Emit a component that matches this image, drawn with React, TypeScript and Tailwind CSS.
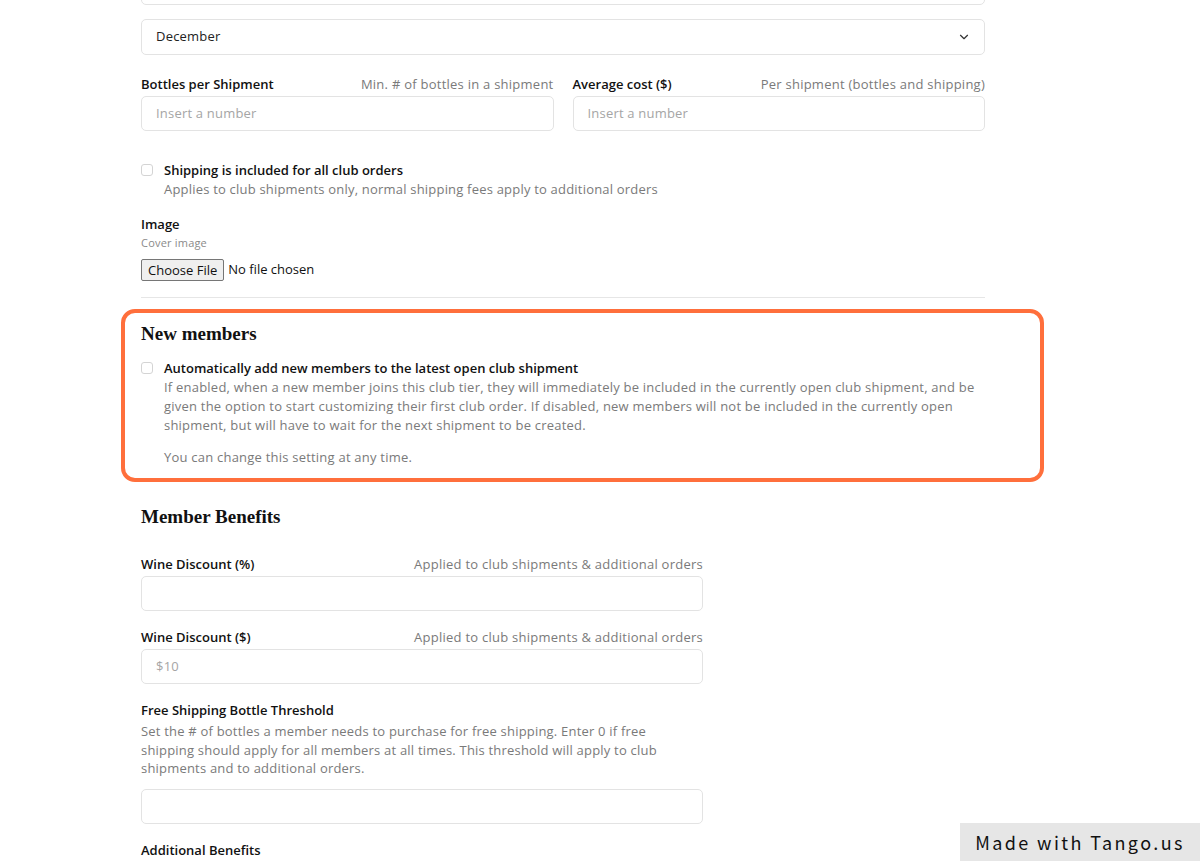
import React from 'react';
import { ChevronDown } from 'lucide-react';

const sans = { fontFamily: '"Open Sans", "Liberation Sans", sans-serif' };
const serif = { fontFamily: '"Liberation Serif", "Times New Roman", serif' };

function Field({ label, hint, placeholder, value }: { label: string; hint?: string; placeholder?: string; value?: string }) {
  return (
    <div>
      <div className="flex justify-between h-[18px] leading-[18px] text-[13px]">
        <span className="font-semibold text-[#111]">{label}</span>
        {hint && <span className="text-[#7a7a7a] tracking-[0.25px]">{hint}</span>}
      </div>
      <div className="mt-[3px] h-[35px] rounded-[5px] border border-[#e3e3e3] bg-white px-[14px] flex items-center text-[13px] tracking-[0.2px] text-[#a5a5a5]">
        {placeholder || value || ''}
      </div>
    </div>
  );
}

function Check() {
  return <span className="mt-[4px] h-3 w-3 shrink-0 rounded-[3px] border border-[#d4d4d4] bg-white" />;
}

export default function App() {
  return (
    <div className="relative min-h-screen overflow-hidden bg-white" style={sans}>
      <div className="ml-[141px] w-[844px]">
        {/* field cut off at the top */}
        <div className="-mt-[31px] h-9 rounded-[5px] border border-[#e3e3e3]" />

        <div className="mt-[14px] h-9 rounded-[5px] border border-[#e3e3e3] px-[14px] flex items-center justify-between text-[13px] tracking-[0.2px] text-[#222]">
          <span>December</span>
          <ChevronDown size={14} strokeWidth={2} className="text-[#333] -mr-[1px]" />
        </div>

        <div className="mt-5 grid grid-cols-2 gap-x-[19px]">
          <Field label="Bottles per Shipment" hint="Min. # of bottles in a shipment" placeholder="Insert a number" />
          <Field label="Average cost ($)" hint="Per shipment (bottles and shipping)" placeholder="Insert a number" />
        </div>

        <div className="mt-[29px] flex gap-[11px]">
          <Check />
          <div className="text-[13px]">
            <div className="h-5 leading-5 font-semibold text-[#111]">Shipping is included for all club orders</div>
            <div className="leading-[19px] text-[#7a7a7a] tracking-[0.2px]">Applies to club shipments only, normal shipping fees apply to additional orders</div>
          </div>
        </div>

        <div className="mt-4">
          <div className="leading-[18px] text-[13px] font-semibold text-[#111]">Image</div>
          <div className="mt-[2px] leading-4 text-[11px] tracking-[0.2px] text-[#8a8a8a]">Cover image</div>
          <div className="mt-2 flex items-center h-[22px] text-[13px] text-[#111]">
            <button className="h-[22px] px-[6px] border border-[#767676] bg-[#efefef] rounded-[2px] text-[13px] leading-none text-[#111]">
              Choose File
            </button>
            <span className="ml-[4px]">No file chosen</span>
          </div>
        </div>

        <div className="mt-4 border-t border-[#e6e6e6]" />

        {/* New members */}
        <section className="relative mt-6">
          <div className="pointer-events-none absolute -top-[13px] -bottom-[15px] -left-5 -right-[59px] rounded-[14px] border-4 border-[#ff6f3c]" />
          <h2 className="h-6 leading-6 text-[19px] font-bold text-[#111]" style={serif}>New members</h2>
          <div className="mt-3 flex gap-[11px]">
            <Check />
            <div className="text-[13px]">
              <div className="h-5 leading-5 font-semibold text-[#111]">Automatically add new members to the latest open club shipment</div>
              <div className="leading-[19px] text-[#7a7a7a] tracking-[0.22px]">
                If enabled, when a new member joins this club tier, they will immediately be included in the currently open club shipment, and be<br />
                given the option to start customizing their first club order. If disabled, new members will not be included in the currently open<br />
                shipment, but will have to wait for the next shipment to be created.
              </div>
              <div className="mt-[13px] leading-[19px] text-[#7a7a7a] tracking-[0.22px]">You can change this setting at any time.</div>
            </div>
          </div>
        </section>

        {/* Member benefits */}
        <h2 className="mt-[38px] h-6 leading-6 text-[19px] font-bold text-[#111]" style={serif}>Member Benefits</h2>

        <div className="w-[562px]">
          <div className="mt-[26px]">
            <Field label="Wine Discount (%)" hint="Applied to club shipments & additional orders" />
          </div>
          <div className="mt-[17px]">
            <Field label="Wine Discount ($)" hint="Applied to club shipments & additional orders" placeholder="$10" />
          </div>

          <div className="mt-[17px]">
            <div className="h-[18px] leading-[18px] text-[13px] font-semibold text-[#111]">Free Shipping Bottle Threshold</div>
            <div className="mt-[3px] leading-[18.5px] text-[13px] tracking-[0.2px] text-[#7a7a7a]">
              Set the # of bottles a member needs to purchase for free shipping. Enter 0 if free<br />
              shipping should apply for all members at all times. This threshold will apply to club<br />
              shipments and to additional orders.
            </div>
            <div className="mt-[11px] h-[35px] rounded-[5px] border border-[#e3e3e3]" />
          </div>

          <div className="mt-[17px] h-[18px] leading-[18px] text-[13px] font-semibold text-[#111]">Additional Benefits</div>
        </div>
      </div>

      <div className="fixed bottom-0 right-0 h-[38px] w-[240px] bg-[#e6e6e6] flex items-center justify-center text-[18px] tracking-[2.4px] text-[#111]" style={{ fontFamily: '"Noto Sans CJK JP", "Noto Sans", sans-serif' }}>
        Made with Tango.us
      </div>
    </div>
  );
}
